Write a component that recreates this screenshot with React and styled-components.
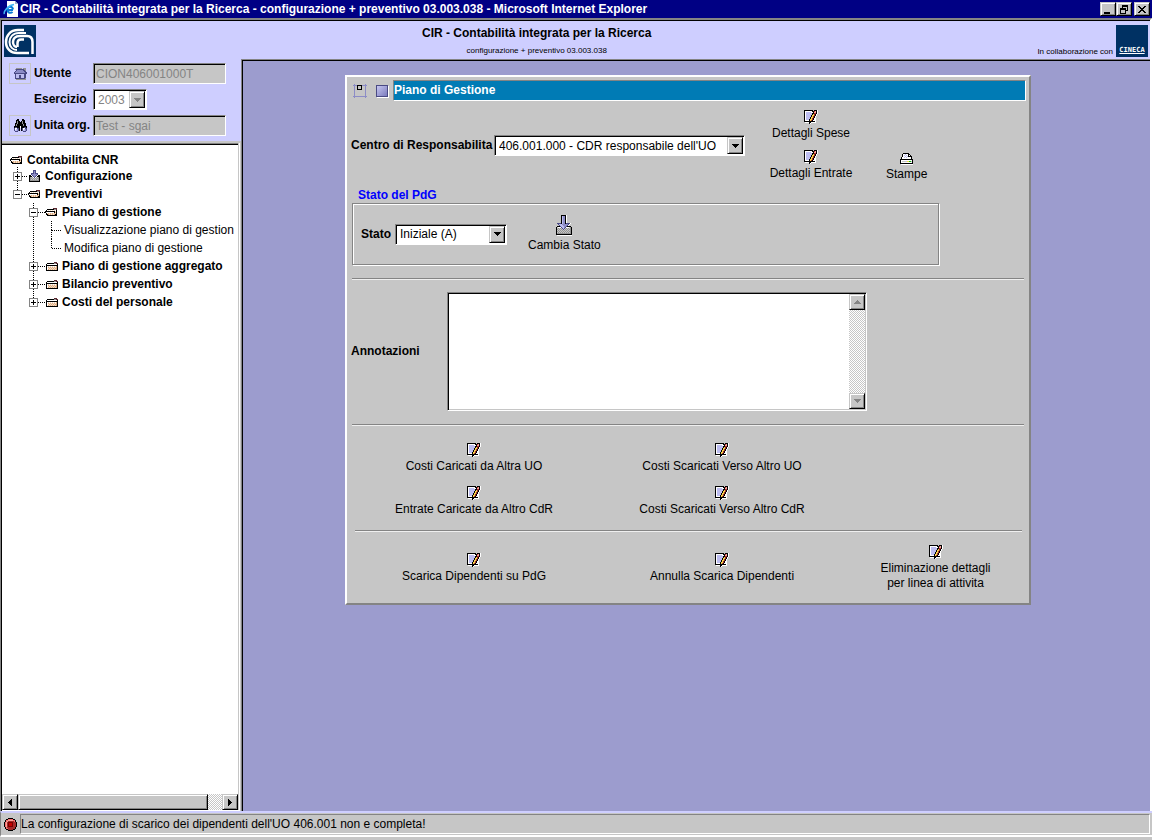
import React from "react";
import styled, { createGlobalStyle, css } from "styled-components";

const c = {
  gray: "#c6c6c6",
  dark: "#848484",
  lavender: "#ceceff",
  desk: "#9c9cce",
  navy: "#000084",
  teal: "#007bb5",
};

const GlobalStyle = createGlobalStyle`
  * { box-sizing: border-box; }
  body {
    margin: 0;
    background: ${c.gray};
    color: #000;
    font: 12px/15px "Liberation Sans", Arial, sans-serif;
  }
  button, input, select, textarea { font: inherit; color: inherit; border-radius: 0; margin: 0; }
`;

/* ---------- bevels ---------- */

const sunken = css`
  border: 1px solid;
  border-color: ${c.dark} #fff #fff ${c.dark};
  box-shadow: inset 1px 1px #000, inset -1px -1px ${c.gray};
`;

const raised = css`
  border: 1px solid;
  border-color: ${c.gray} #000 #000 ${c.gray};
  box-shadow: inset 1px 1px #fff, inset -1px -1px ${c.dark};
  background: ${c.gray};
`;

/* ---------- pixel icons ---------- */

const palette = {
  k: "#000", w: "#fff", l: "#bdbdf0", m: "#8c8cc6", d: "#4a4a84",
  g: "#00c600", y: "#f7d64a", r: "#a52929", p: "#f7a59c", t: "#f7dec6",
  s: "#dead84", a: "#949494", e: "#c6c6c6", n: "#5a2931", x: "#f76b6b",
  c: "#c60000", b: "#7b0000",
};

const art = {
  edit: [
    "kkkkkkkkk.kkkw",
    "kwwwwwwwkkrpkw",
    "kwlllllwwkppkw",
    "kwllllllkkrrkw",
    "kwllllllkyrkw.",
    "kwlllllkyyrkw.",
    "kwlllllkyrkw..",
    "kwllllkyyrkw..",
    "kwllllkyrkww..",
    "kwlllkyyrkww..",
    "kwwwwkyrkwww..",
    "kkkkkkkkkkkw..",
    ".wwwwkkwwwww..",
    ".....kw.......",
  ],
  print: [
    "...kkkkkk....",
    "..kwwlwwkk...",
    "..kwlwlwkwk..",
    "..kwwlwlkkkk.",
    ".kwwlwlwwwwk.",
    ".kwwwwwwwwwk.",
    "kkkkkkkkkkkkk",
    "kwwwwwwwwwwwk",
    "kweeeeeyyggek",
    "kwwwwwwwwwwwk",
    "kkkkkkkkkkkkk",
    ".wwwwwwwwwwww",
  ],
  load: [
    ".....kkkkkw.....",
    ".....klmmkw.....",
    ".....klmmkw.....",
    ".....klmmkw.....",
    ".....klmmkw.....",
    ".....klmmkw.....",
    ".....klmmkw.....",
    ".....klmmkw.....",
    ".ddddklmmkddddw.",
    "..dlllmmmmmmdw..",
    "...dlllmmmmdw...",
    ".kkkdlllmmdkkkk.",
    "kewwwdllmdwwweak",
    "keaeaedldeaeaeak",
    "kaeaeaedeaeaeaak",
    "keaeaeaeaeaeaeak",
    "kaeaeaeaeaeaeaak",
    "keaeaeaeaeaeaeak",
    "kaaaaaaaaaaaaaak",
    "kkkkkkkkkkkkkkkk",
    ".wwwwwwwwwwwwwww",
  ],
  loadSmall: [
    ".....ddd.....",
    ".....dmd.....",
    ".....dmd.....",
    "...dddmddd...",
    "...dmmmmmd...",
    ".kk.dmmmd.kk.",
    ".kkk.dmd.kkk.",
    ".kaea.d.aeak.",
    ".kaaeaeaeaak.",
    ".kaeaeaeaeak.",
    ".kaaaaaaaaak.",
    ".kkkkkkkkkkk.",
  ],
  house: [
    "..aaaaaa.aaa.",
    ".addddddddaa.",
    "..dmmmmmmdda.",
    ".dmmmmmmmmdd.",
    "dmmmmmmmmmmdd",
    "ddddddddddddd",
    ".dlllllllldd.",
    ".dlllddllldd.",
    ".dlllddllldd.",
    ".dlllddllldd.",
    ".dddddddddda.",
    "..aaaaaaaaaa.",
  ],
  find: [
    "...kk...kk...",
    "..kkk...kkk..",
    "..kakk.kakk..",
    "..kakkkkakk..",
    ".kkakkkkakkk.",
    ".kakkkkkkakk.",
    ".kakkkkkkakk.",
    "kkkkkkwkkkkkk",
    "kddkkkwkkkddk",
    "dwwddk.kdwwdd",
    "dwlmdk.kdwlmd",
    "dllmdk.kdllmd",
    ".ddd.....ddd.",
  ],
  open: [
    "........nnnn.",
    "..kkkkkkkaan.",
    ".kwtwtwtwtwk.",
    "kkkkkkkkkktk.",
    "kwwwwwwwwksk.",
    ".ktststststk.",
    ".kkstststskk.",
    "..kkkkkkkkkk.",
  ],
  closed: [
    ".........nnn.",
    "..kkkkkkkaann",
    ".kwwwwwwwwwwk",
    ".kkkkkkkkkkkk",
    ".kwtwtwtwtwsk",
    ".kwststststsk",
    ".kwtstststssk",
    ".kwststststsk",
    ".kkkkkkkkkkkk",
  ],
  stop: [
    "....kkkkk....",
    "..kkxxxxxkk..",
    ".kxxpppppxxk.",
    ".kxprrrrrrxk.",
    "kxprbbbbbrrrk",
    "kxprbcccbrrrk",
    "kxprbcccbrrrk",
    "kxprbcccbrrrk",
    "kxprbbbbbrrrk",
    ".kxrrrrrrrrk.",
    ".kxxrrrrrrrk.",
    "..kkrrrrrkk..",
    "....kkkkk....",
  ],
  layout: [
    ".m..........m.",
    "mmmmkkkkkmmmmm",
    ".m..keeek...m.",
    ".m..keeek...m.",
    ".m..keeek...m.",
    ".m..kkkkk...m.",
    ".m..........m.",
    ".m..........m.",
    ".m..........m.",
    ".m..........m.",
    ".m..........m.",
    ".m..........m.",
    "mmmmmmmmmmmmmm",
    ".m..........m.",
  ],
};

const Pixels = styled.svg`
  display: block;
  flex: none;
  shape-rendering: crispEdges;
`;

function PixelIcon({ name }) {
  const rows = art[name];
  const w = rows[0].length;
  return (
    <Pixels width={w} height={rows.length} viewBox={`0 0 ${w} ${rows.length}`} aria-hidden="true">
      {rows.flatMap((row, y) =>
        [...row].map((ch, x) =>
          ch === "." ? null : <rect key={`${x}-${y}`} x={x} y={y} width="1" height="1" fill={palette[ch]} />
        )
      )}
    </Pixels>
  );
}

/* ---------- window frame ---------- */

const Page = styled.div`
  min-height: 100vh;
  display: flex;
  flex-direction: column;
`;

const TitleBar = styled.div`
  display: flex;
  align-items: center;
  height: 18px;
  padding: 0 2px 0 3px;
  gap: 2px;
  background: ${c.navy};
  color: #fff;
  font-weight: bold;
`;

const TitleText = styled.span`
  flex: 1;
  white-space: nowrap;
  overflow: hidden;
`;

const WindowButton = styled.button`
  ${raised}
  width: 16px;
  height: 14px;
  padding: 0;
  display: grid;
  place-items: center;
  margin-left: ${(p) => (p.$apart ? "0" : "-2px")};
`;

const Frame = styled.div`
  flex: 1;
  display: flex;
  flex-direction: column;
  background: ${c.lavender};
  border: solid ${c.dark};
  border-width: 2px 2px 0 1px;
  border-right-color: #fff;
  box-shadow: inset 1px 1px #000;
  padding: 1px 0 0 1px;
`;

const Header = styled.header`
  display: flex;
  height: 38px;
  padding: 0 2px;
`;

const Brand = styled.h1`
  flex: 1;
  margin: 0;
  padding-top: 4px;
  text-align: center;
  font-size: 12px;
  line-height: 17px;
`;

const Version = styled.small`
  display: block;
  font-size: 8px;
  font-weight: normal;
  line-height: 17px;
`;

const Partner = styled.div`
  display: flex;
  align-items: flex-end;
  gap: 3px;
  font-size: 8px;
  line-height: 11px;
  padding-bottom: 2px;
`;

const CinecaLogo = styled.a`
  display: flex;
  align-items: flex-end;
  justify-content: center;
  width: 32px;
  height: 32px;
  padding-bottom: 3px;
  background: #003163;
  color: #fff;
  font: bold 7px/8px "DejaVu Sans Mono", monospace;
  text-decoration: underline;
`;

const CnrLogo = styled.svg`
  display: block;
  margin-top: 4px;
  flex: none;
`;

const Body = styled.div`
  flex: 1;
  display: flex;
  min-height: 0;
`;

/* ---------- left side ---------- */

const Side = styled.aside`
  width: 239px;
  flex: none;
  display: flex;
  flex-direction: column;
`;

const Context = styled.form`
  display: grid;
  grid-template-columns: 22px 56px 133px;
  grid-auto-rows: 21px;
  align-items: center;
  gap: 5px 3px;
  padding: 4px 7px 5px;
`;

const ToolButton = styled.button`
  display: grid;
  place-items: center;
  width: 22px;
  height: 21px;
  padding: 0;
  background: none;
  border: 1px solid ${c.gray};
`;

const Label = styled.label`
  font-weight: bold;
  white-space: nowrap;
  grid-column: ${(p) => p.$column || "auto"};
`;

const TextBox = styled.input`
  ${sunken}
  width: 100%;
  height: 21px;
  padding: 1px 2px;
  background: ${c.gray};
  color: ${c.dark};
`;

const SelectBox = styled.span`
  ${sunken}
  display: inline-grid;
  grid-template-columns: 1fr 16px;
  width: ${(p) => p.$width};
  height: 21px;
  padding: 1px;
  background: #fff;
  box-shadow: inset 1px 1px #000;
`;

const NativeSelect = styled.select`
  grid-area: 1 / 1 / 2 / 3;
  appearance: none;
  width: 100%;
  min-width: 0;
  padding: 1px 16px 0 3px;
  border: 0;
  background: transparent;
  &:disabled { color: ${c.dark}; opacity: 1; }
`;

const Arrow = styled.span`
  ${raised}
  grid-area: 1 / 2;
  display: grid;
  place-items: center;
  pointer-events: none;
`;

function DropDown({ id, width, disabled, options }) {
  return (
    <SelectBox $width={width}>
      <NativeSelect id={id} disabled={disabled}>
        {options.map((o) => <option key={o}>{o}</option>)}
      </NativeSelect>
      <Arrow><Triangle dir="down" fill={disabled ? c.dark : "#000"} /></Arrow>
    </SelectBox>
  );
}

const triangles = {
  down: [7, 4, "M0 0h7v1H0zM1 1h5v1H1zM2 2h3v1H2zM3 3h1v1H3z"],
  up: [7, 4, "M3 0h1v1H3zM2 1h3v1H2zM1 2h5v1H1zM0 3h7v1H0z"],
  left: [4, 7, "M3 0h1v7H3zM2 1h1v5H2zM1 2h1v3H1zM0 3h1v1H0z"],
  right: [4, 7, "M0 0h1v7H0zM1 1h1v5H1zM2 2h1v3H2zM3 3h1v1H3z"],
};

function Triangle({ dir, fill = "#000" }) {
  const [w, h, d] = triangles[dir];
  return <Pixels width={w} height={h} viewBox={`0 0 ${w} ${h}`} aria-hidden="true"><path d={d} fill={fill} /></Pixels>;
}

const TreePane = styled.nav`
  flex: 1;
  display: flex;
  flex-direction: column;
  background: #fff;
  border-top: 2px solid ${c.gray};
  padding: 0 3px 1px 0;
  box-shadow: inset -1px 0 ${c.gray}, inset -2px -1px #fff, inset -3px 0 ${c.gray};
`;

const TreeInner = styled.div`
  flex: 1;
  border-top: 1px solid ${c.dark};
  box-shadow: inset 0 1px #000;
  padding-top: 9px;
  overflow: hidden;
`;

const TreeRow = styled.div`
  display: flex;
  align-items: center;
  height: ${(p) => (p.$root ? "14px" : "18px")};
  padding-left: ${(p) => (p.$root ? "8px" : "11px")};
  font-weight: ${(p) => (p.$leaf ? "normal" : "bold")};
  white-space: nowrap;
`;

const Rail = styled.span`
  flex: none;
  align-self: stretch;
  display: flex;
  flex-direction: column;
  align-items: center;
  width: ${(p) => p.$width || "9px"};
`;

const Dots = styled.span`
  flex: ${(p) => (p.$across ? "none" : "1")};
  width: ${(p) => p.$across || "1px"};
  ${(p) => p.$across && "height: 1px;"}
  ${(p) => !p.$hidden && css`
    background: ${p.$across
      ? "repeating-linear-gradient(90deg, #000 0 1px, transparent 1px 2px)"
      : "repeating-linear-gradient(#000 0 1px, transparent 1px 2px)"};
  `}
`;

const Toggle = styled.button`
  flex: none;
  display: grid;
  place-items: center;
  width: 9px;
  height: 9px;
  padding: 0;
  background: #fff;
  border: 1px solid ${c.dark};
`;

const Node = styled.a`
  display: flex;
  align-items: center;
  gap: 4px;
  padding-left: ${(p) => (p.$leaf ? "2px" : "0")};
  color: inherit;
  text-decoration: none;
`;

const LeafArm = styled.span`
  display: flex;
  flex: none;
  margin-left: -13px;
`;

function Branch({ level = 1, open, icon, label, last }) {
  return (
    <TreeRow>
      {level === 2 && <Rail $width="16px" />}
      <Rail>
        <Dots />
        <Toggle type="button" aria-label={`${open ? "Chiudi" : "Apri"} ${label}`}>
          <Pixels width="5" height="5" viewBox="0 0 5 5" aria-hidden="true">
            <path d={open ? "M0 2h5v1H0z" : "M0 2h5v1H0zM2 0h1v5H2z"} fill="#000" />
          </Pixels>
        </Toggle>
        <Dots $hidden={last} />
      </Rail>
      <Dots $across={level === 2 ? "7px" : "6px"} />
      <Node href="#"><PixelIcon name={icon} />{label}</Node>
    </TreeRow>
  );
}

function Leaf({ label, last }) {
  return (
    <TreeRow $leaf>
      <Rail $width="16px" />
      <Rail><Dots /></Rail>
      <Rail $width="27px"><Dots /><Dots $hidden={last} /></Rail>
      <LeafArm><Dots $across="10px" /></LeafArm>
      <Node href="#" $leaf>{label}</Node>
    </TreeRow>
  );
}

const dither = css`
  background: repeating-conic-gradient(${c.gray} 0 25%, #fff 0 50%) 0 0 / 2px 2px;
`;

const HScroll = styled.div`
  ${dither}
  display: flex;
  height: 16px;
`;

const ScrollButton = styled.button`
  ${raised}
  flex: none;
  display: grid;
  place-items: center;
  width: 16px;
  height: 16px;
  padding: 0;
`;

const HThumb = styled.div`
  ${raised}
  flex: 1;
  margin-right: 14px;
`;

/* ---------- main area ---------- */

const Main = styled.main`
  flex: 1;
  min-width: 0;
  padding: 15px 16px 15px 0;
  background: ${c.desk};
  border: 1px solid ${c.dark};
  border-width: 1px 0 0 1px;
  box-shadow: inset 1px 1px #000;
`;

const Panel = styled.form`
  width: 686px;
  max-width: 100%;
  margin: 0 auto;
  padding: 3px 3px 12px 4px;
  background: ${c.gray};
  border: 2px solid;
  border-color: #fff ${c.dark} ${c.dark} #fff;
`;

const PanelHead = styled.div`
  display: flex;
  align-items: center;
  gap: 9px;
  padding-left: 2px;
`;

const PanelTitle = styled.h2`
  flex: 1;
  margin: 0 0 0 -4px;
  height: 21px;
  background: ${c.teal};
  color: #fff;
  border: 1px solid;
  border-color: ${c.dark} #fff #fff ${c.dark};
  font-size: 12px;
  line-height: 19px;
`;

const Swatch = styled.span`
  width: 12px;
  height: 12px;
  background: linear-gradient(135deg, #c6c6f0, #7b7bbd);
  border: 1px solid #4a4a84;
  box-shadow: 1px 1px #fff;
`;

const CdrRow = styled.div`
  display: grid;
  grid-template-columns: 143px 250px 134px 1fr;
  align-items: center;
  height: 87px;
  padding-top: 2px;
`;

const Stack = styled.div`
  display: flex;
  flex-direction: column;
  align-items: center;
  gap: 9px;
`;

const Action = styled.button`
  display: flex;
  flex-direction: column;
  align-items: center;
  gap: 2px;
  padding: 0;
  border: 0;
  background: none;
  line-height: 15px;
  text-align: center;
`;

const PrintSlot = styled.div`
  align-self: end;
  padding: 0 0 6px 8px;
`;

const Group = styled.fieldset`
  margin: 0;
  padding: 0;
  border: 0;
  width: 588px;
  max-width: 100%;
`;

const Legend = styled.legend`
  padding: 0 7px;
  color: #00f;
  font-weight: bold;
  line-height: 15px;
`;

const GroupBox = styled.div`
  display: flex;
  align-items: center;
  gap: 4px;
  height: 62px;
  padding: 0 8px;
  margin-left: 1px;
  border: 1px solid ${c.dark};
  box-shadow: inset 1px 1px #fff, 1px 1px #fff;
`;

const ActionSlot = styled.div`
  margin-left: 17px;
`;

const Rule = styled.hr`
  height: 2px;
  margin: ${(p) => (p.$inset ? "13px 4px 0 4px" : "13px 2px 0 1px")};
  border: 0;
  border-top: 1px solid ${c.dark};
  border-bottom: 1px solid #efefef;
`;

const Notes = styled.div`
  display: grid;
  grid-template-columns: 96px 420px;
  align-items: center;
  margin-top: 12px;
`;

const NotesField = styled.div`
  ${sunken}
  display: flex;
  height: 119px;
  padding: 1px;
  background: #fff;
`;

const NotesArea = styled.textarea`
  flex: 1;
  min-width: 0;
  border: 0;
  padding: 2px;
  resize: none;
  background: transparent;
`;

const VScroll = styled.div`
  ${dither}
  display: flex;
  flex-direction: column;
  justify-content: space-between;
`;

const ActionGrid = styled.div`
  display: grid;
  grid-template-columns: 246px 250px 177px;
  justify-items: center;
  align-items: center;
  row-gap: 12px;
  padding-top: ${(p) => p.$top};
`;

const StatusBar = styled.footer`
  display: flex;
  align-items: center;
  height: 26px;
  background: ${c.gray};
  border-top: 2px solid ${c.lavender};
  border-left: 1px solid ${c.dark};
  border-bottom: 2px solid #fff;
  padding: 1px 2px 1px 3px;
  gap: 3px;
`;

const StatusText = styled.output`
  flex: 1;
  align-self: stretch;
  border: 1px solid;
  border-color: ${c.dark} #fff #fff ${c.dark};
  line-height: 18px;
`;

const Bottom = styled.div`
  height: 3px;
`;

function Cmd({ icon = "edit", children }) {
  return <Action type="button"><PixelIcon name={icon} /><span>{children}</span></Action>;
}

export default function App() {
  return (
    <Page>
      <GlobalStyle />
      <TitleBar>
        <svg width="15" height="16" viewBox="0 0 15 16" aria-hidden="true">
          <path d="M4 0h8l3 3v13H4z" fill="#fff" />
          <path d="M12 0l3 3h-3z" fill="#9cb5ce" />
          <path d="M10 9H4.500C4.500 12 8 12.500 9.500 10.800M4.500 8C5 5 9.500 5 10 8.500" fill="none" stroke="#0a7bd6" strokeWidth="2" />
          <path d="M1.500 13C0 11 5 4 11 3.500" fill="none" stroke="#42b5f7" strokeWidth="1.500" />
        </svg>
        <TitleText>CIR - Contabilità integrata per la Ricerca - configurazione + preventivo 03.003.038 - Microsoft Internet Explorer</TitleText>
        <WindowButton type="button" aria-label="Riduci a icona">
          <Pixels width="10" height="9" viewBox="0 0 10 9"><path d="M1 7h6v2H1z" /></Pixels>
        </WindowButton>
        <WindowButton type="button" aria-label="Ripristina">
          <Pixels width="10" height="9" viewBox="0 0 10 9"><path d="M3 0h6v6H7V5h1V2H4v1H3zM1 3h6v6H1zM2 5v3h4V5z" fillRule="evenodd" /></Pixels>
        </WindowButton>
        <WindowButton type="button" $apart aria-label="Chiudi">
          <Pixels width="10" height="9" viewBox="0 0 10 9"><path d="M1 1h2v1h1v1h2V2h1V1h2v1H8v1H7v1H6v1h1v1h1v1h1v1H7V7H6V6H4v1H3v1H1V7h1V6h1V5h1V4H3V3H2V2H1z" /></Pixels>
        </WindowButton>
      </TitleBar>

      <Frame>
        <Header>
          <CnrLogo width="32" height="32" viewBox="0 0 32 32" role="img" aria-label="CNR">
            <rect width="32" height="32" fill="#003163" />
            <g fill="none" stroke="#fff" strokeWidth="2.500">
              <path d="M28.500 29V17C28.500 13 27 11 23 11H16C11 11 9 14 9 17C9 20 11 22 13 22" />
              <path d="M20 5H14C6 5 2 11 2 17C2 24 7 28 13 28H25" />
              <path d="M22 8H15C9 8 5.500 12 5.500 17C5.500 22 9 25 13 25" strokeWidth="2" />
              <path d="M13.500 22V18C13.500 15.500 15 14.500 17 14.500H20" />
            </g>
          </CnrLogo>
          <Brand>
            CIR - Contabilità integrata per la Ricerca
            <Version>configurazione + preventivo 03.003.038</Version>
          </Brand>
          <Partner>
            In collaborazione con
            <CinecaLogo href="#">CINECA</CinecaLogo>
          </Partner>
        </Header>

        <Body>
          <Side>
            <Context>
              <ToolButton type="button" aria-label="Home"><PixelIcon name="house" /></ToolButton>
              <Label htmlFor="utente">Utente</Label>
              <TextBox id="utente" defaultValue="CION406001000T" disabled />
              <Label htmlFor="esercizio" $column="2">Esercizio</Label>
              <DropDown id="esercizio" width="54px" options={["2003"]} disabled />
              <ToolButton type="button" aria-label="Cerca"><PixelIcon name="find" /></ToolButton>
              <Label htmlFor="unita">Unita org.</Label>
              <TextBox id="unita" defaultValue="Test - sgai" disabled />
            </Context>

            <TreePane>
              <TreeInner>
                <TreeRow $root>
                  <Node href="#"><PixelIcon name="open" />Contabilita CNR</Node>
                </TreeRow>
                <Branch icon="loadSmall" label="Configurazione" />
                <Branch icon="open" label="Preventivi" open last />
                <Branch level={2} icon="open" label="Piano di gestione" open />
                <Leaf label="Visualizzazione piano di gestion" />
                <Leaf label="Modifica piano di gestione" last />
                <Branch level={2} icon="closed" label="Piano di gestione aggregato" />
                <Branch level={2} icon="closed" label="Bilancio preventivo" />
                <Branch level={2} icon="closed" label="Costi del personale" last />
              </TreeInner>
              <HScroll>
                <ScrollButton type="button" aria-label="Scorri a sinistra"><Triangle dir="left" /></ScrollButton>
                <HThumb />
                <ScrollButton type="button" aria-label="Scorri a destra"><Triangle dir="right" /></ScrollButton>
              </HScroll>
            </TreePane>
          </Side>

          <Main>
            <Panel>
              <PanelHead>
                <PixelIcon name="layout" />
                <Swatch />
                <PanelTitle>Piano di Gestione</PanelTitle>
              </PanelHead>

              <CdrRow>
                <Label htmlFor="cdr">Centro di Responsabilita</Label>
                <DropDown id="cdr" width="251px" options={["406.001.000 - CDR responsabile dell'UO"]} />
                <Stack>
                  <Cmd>Dettagli Spese</Cmd>
                  <Cmd>Dettagli Entrate</Cmd>
                </Stack>
                <PrintSlot><Cmd icon="print">Stampe</Cmd></PrintSlot>
              </CdrRow>

              <Group>
                <Legend>Stato del PdG</Legend>
                <GroupBox>
                  <Label htmlFor="stato">Stato</Label>
                  <DropDown id="stato" width="112px" options={["Iniziale (A)"]} />
                  <ActionSlot><Cmd icon="load">Cambia Stato</Cmd></ActionSlot>
                </GroupBox>
              </Group>

              <Rule />
              <Notes>
                <Label htmlFor="note">Annotazioni</Label>
                <NotesField>
                  <NotesArea id="note" />
                  <VScroll>
                    <ScrollButton type="button" aria-label="Scorri in alto"><Triangle dir="up" fill={c.dark} /></ScrollButton>
                    <ScrollButton type="button" aria-label="Scorri in basso"><Triangle dir="down" fill={c.dark} /></ScrollButton>
                  </VScroll>
                </NotesField>
              </Notes>
              <Rule />

              <ActionGrid $top="17px">
                <Cmd>Costi Caricati da Altra UO</Cmd>
                <Cmd>Costi Scaricati Verso Altro UO</Cmd>
                <span />
                <Cmd>Entrate Caricate da Altro CdR</Cmd>
                <Cmd>Costi Scaricati Verso Altro CdR</Cmd>
              </ActionGrid>
              <Rule $inset />
              <ActionGrid $top="13px">
                <Cmd>Scarica Dipendenti su PdG</Cmd>
                <Cmd>Annulla Scarica Dipendenti</Cmd>
                <Cmd>Eliminazione dettagli<br />per linea di attivita</Cmd>
              </ActionGrid>
            </Panel>
          </Main>
        </Body>
      </Frame>

      <StatusBar>
        <PixelIcon name="stop" />
        <StatusText>La configurazione di scarico dei dipendenti dell'UO 406.001 non e completa!</StatusText>
      </StatusBar>
      <Bottom />
    </Page>
  );
}
